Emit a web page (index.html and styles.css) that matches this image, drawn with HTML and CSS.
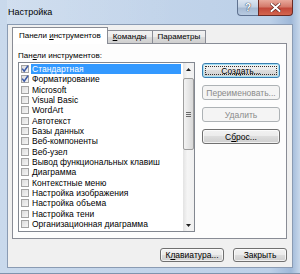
FILE: index.html
```html
<!DOCTYPE html>
<html lang="ru">
<head>
<meta charset="utf-8">
<title>Настройка</title>
<link rel="stylesheet" href="styles.css">
</head>
<body>
<div class="window">
  <div class="titlebar">
    <span class="title">Настройка</span>
    <div class="caption">
      <div class="cap help">?</div>
      <div class="cap close">
        <svg width="11" height="9" viewBox="0 0 11 9"><path d="M1.5 1 L9.5 8 M9.5 1 L1.5 8" stroke="#5a1a14" stroke-width="3.2" stroke-linecap="square"/><path d="M1.5 1 L9.5 8 M9.5 1 L1.5 8" stroke="#ffffff" stroke-width="2" stroke-linecap="square"/></svg>
      </div>
    </div>
  </div>
  <div class="client">
    <div class="tabs">
      <div class="tab active">Панели <u>и</u>нструментов</div>
      <div class="tab"><u>К</u>оманды</div>
      <div class="tab">Параметры</div>
    </div>
    <div class="panel">
      <div class="left">
        <div class="label">Пан<u>е</u>ли инструментов:</div>
        <div class="listbox">
          <div class="items">
            <div class="row"><span class="cb checked"><svg width="8" height="8" viewBox="0 0 8 8"><path d="M1.2 3.6 L3.2 6.2 L7 0.8" fill="none" stroke="#3b5aa8" stroke-width="1.5"/></svg></span><span class="txt sel">Стандартная</span></div>
            <div class="row"><span class="cb checked"><svg width="8" height="8" viewBox="0 0 8 8"><path d="M1.2 3.6 L3.2 6.2 L7 0.8" fill="none" stroke="#3b5aa8" stroke-width="1.5"/></svg></span><span class="txt">Форматирование</span></div>
            <div class="row"><span class="cb"></span><span class="txt">Microsoft</span></div>
            <div class="row"><span class="cb"></span><span class="txt">Visual Basic</span></div>
            <div class="row"><span class="cb"></span><span class="txt">WordArt</span></div>
            <div class="row"><span class="cb"></span><span class="txt">Автотекст</span></div>
            <div class="row"><span class="cb"></span><span class="txt">Базы данных</span></div>
            <div class="row"><span class="cb"></span><span class="txt">Веб-компоненты</span></div>
            <div class="row"><span class="cb"></span><span class="txt">Веб-узел</span></div>
            <div class="row"><span class="cb"></span><span class="txt">Вывод функциональных клавиш</span></div>
            <div class="row"><span class="cb"></span><span class="txt">Диаграмма</span></div>
            <div class="row"><span class="cb"></span><span class="txt">Контекстные меню</span></div>
            <div class="row"><span class="cb"></span><span class="txt">Настройка изображения</span></div>
            <div class="row"><span class="cb"></span><span class="txt">Настройка объема</span></div>
            <div class="row"><span class="cb"></span><span class="txt">Настройка тени</span></div>
            <div class="row"><span class="cb"></span><span class="txt">Организационная диаграмма</span></div>
          </div>
          <div class="scrollbar">
            <div class="arrow"><svg width="5" height="3" viewBox="0 0 5 3"><path d="M0 3 L2.5 0 L5 3 Z" fill="#222"/></svg></div>
            <div class="track">
              <div class="thumb"><div class="grip"><i></i><i></i><i></i></div></div>
            </div>
            <div class="arrow"><svg width="5" height="3" viewBox="0 0 5 3"><path d="M0 0 L2.5 3 L5 0 Z" fill="#222"/></svg></div>
          </div>
        </div>
      </div>
      <div class="side">
        <div class="btn focused"><span class="focus">Создать...</span></div>
        <div class="btn disabled">Переименовать...</div>
        <div class="btn disabled">Удалить</div>
        <div class="btn">С<u>б</u>рос...</div>
      </div>
    </div>
    <div class="footer">
      <div class="btn kbd">К<u>л</u>авиатура...</div>
      <div class="btn closebtn">Закрыть</div>
    </div>
  </div>
</div>
</body>
</html>
```

FILE: styles.css
```css
html, body {
  margin: 0;
  padding: 0;
  background: #c8d8eb;
}

body {
  font-family: "Liberation Sans", Arial, sans-serif;
  font-size: 8.5px;
  color: #000;
}

u {
  text-decoration-thickness: 1px;
  text-underline-offset: 1px;
}

.window {
  width: 300px;
  height: 274px;
  box-sizing: border-box;
  display: flex;
  flex-direction: column;
  padding: 0 7px 5px 7px;
  background: linear-gradient(90deg, #c9d9ec 0%, #c2d4ea 50%, #bcd0e8 90%, #9fb8d8 97%, #c8d8eb 100%);
  border-bottom: 1px solid #7f93ad;
}

.titlebar {
  height: 24px;
  flex: none;
  display: flex;
  align-items: flex-start;
  background: linear-gradient(90deg, rgba(255,255,255,0.15), rgba(255,255,255,0) 60%);
}

.title {
  margin-top: 7px;
  margin-left: 1px;
  font-size: 9px;
  line-height: 11px;
  color: #000;
}

.caption {
  margin-left: auto;
  display: flex;
}

.cap {
  height: 16px;
  box-sizing: border-box;
  display: flex;
  align-items: center;
  justify-content: center;
  border: 1px solid #5f7290;
  border-top: none;
}

.help {
  width: 21px;
  border-radius: 0 0 0 4px;
  border-right: none;
  background: linear-gradient(#dbe5f1 0%, #c3d2e4 45%, #a7bad2 55%, #b8cbe2 100%);
  color: #fff;
  font-size: 10px;
  font-weight: bold;
  text-shadow: 0 0 1px #2c3e58, 0 0 1px #2c3e58;
}

.close {
  width: 35px;
  border-radius: 0 0 4px 0;
  border-color: #6b2a24;
  background: linear-gradient(#e8a99c 0%, #d47a6b 45%, #c2483a 55%, #d4664f 100%);
}

.client {
  flex: 1;
  display: flex;
  flex-direction: column;
  background: #f0f0f0;
  border: 1px solid #8a9bb3;
  padding: 2px 5px 5px 4px;
}

.tabs {
  height: 16px;
  display: flex;
  align-items: flex-end;
  position: relative;
  z-index: 1;
  font-size: 8px;
}

.tab {
  height: 13px;
  box-sizing: border-box;
  padding: 0 5px;
  line-height: 12px;
  border: 1px solid #898c95;
  border-bottom: none;
  border-left: none;
  background: linear-gradient(#f2f2f2 0%, #ebebeb 50%, #dddddd 50%, #cfcfcf 100%);
  white-space: nowrap;
}

.tab.active {
  height: 17px;
  margin-bottom: -1px;
  padding: 0 6px;
  line-height: 15px;
  border-left: 1px solid #898c95;
  background: #ffffff;
}

.panel {
  height: 196px;
  box-sizing: border-box;
  flex: none;
  display: flex;
  gap: 7px;
  padding: 7px 0 0 5px;
  background: #fdfdfd;
  border: 1px solid #898c95;
}

.left {
  display: flex;
  flex-direction: column;
}

.label {
  height: 10px;
  line-height: 10px;
  font-size: 8px;
  white-space: nowrap;
}

.listbox {
  margin-top: 1px;
  width: 177px;
  height: 170px;
  box-sizing: border-box;
  border: 1px solid #828790;
  background: #fff;
  display: flex;
}

.items {
  flex: 1;
  padding-top: 1px;
  overflow: hidden;
}

.row {
  height: 10.33px;
  display: flex;
  align-items: center;
  padding-left: 2px;
  white-space: nowrap;
}

.cb {
  width: 8px;
  height: 8px;
  box-sizing: border-box;
  flex: none;
  border: 1px solid #a3a3a3;
  background: linear-gradient(135deg, #dcdcdc, #f6f6f6);
  display: flex;
  align-items: center;
  justify-content: center;
  margin-right: 2px;
}

.cb svg {
  flex: none;
  margin: -1px;
}

.txt {
  height: 10.33px;
  line-height: 10.33px;
  padding-left: 1px;
}

.txt.sel {
  background: #3399ff;
  color: #fff;
  width: 149px;
}

.scrollbar {
  width: 11px;
  flex: none;
  display: flex;
  flex-direction: column;
  background: linear-gradient(90deg, #e3e3e3, #f5f5f5 40%, #f0f0f0);
}

.arrow {
  height: 12px;
  flex: none;
  display: flex;
  align-items: center;
  justify-content: center;
}

.track {
  flex: 1;
  padding-top: 3px;
}

.thumb {
  height: 72px;
  box-sizing: border-box;
  border: 1px solid #9e9e9e;
  border-radius: 2px;
  background: linear-gradient(90deg, #f3f3f3, #e6e6e6 50%, #d8d8d8);
  display: flex;
  align-items: center;
  justify-content: center;
}

.grip {
  display: flex;
  flex-direction: column;
  gap: 1px;
}

.grip i {
  display: block;
  width: 5px;
  height: 1px;
  background: #6a6a6a;
}

.side {
  display: flex;
  flex-direction: column;
  gap: 7px;
  padding-top: 12px;
}

.btn {
  box-sizing: border-box;
  height: 15px;
  display: flex;
  align-items: center;
  justify-content: center;
  border: 1px solid #707070;
  border-radius: 3px;
  background: linear-gradient(#f2f2f2 0%, #ebebeb 50%, #dddddd 50%, #cfcfcf 100%);
  box-shadow: inset 0 0 0 1px rgba(255,255,255,0.7);
  white-space: nowrap;
}

.side .btn {
  width: 78px;
}

.btn.focused {
  border-color: #3c7fb1;
  box-shadow: inset 0 0 0 1px #a7e2f6;
  padding: 2px;
}

.focus {
  flex: 1;
  align-self: stretch;
  display: flex;
  align-items: center;
  justify-content: center;
  border: 1px dotted #333;
}

.btn.disabled {
  border-color: #adb2b5;
  background: #f4f4f4;
  box-shadow: none;
  color: #8a8a8a;
}

.footer {
  margin-top: 9px;
  display: flex;
  justify-content: flex-end;
  gap: 9px;
}

.footer .btn.kbd {
  width: 64px;
  height: 14px;
}

.footer .btn.closebtn {
  width: 54px;
  height: 14px;
}
```
